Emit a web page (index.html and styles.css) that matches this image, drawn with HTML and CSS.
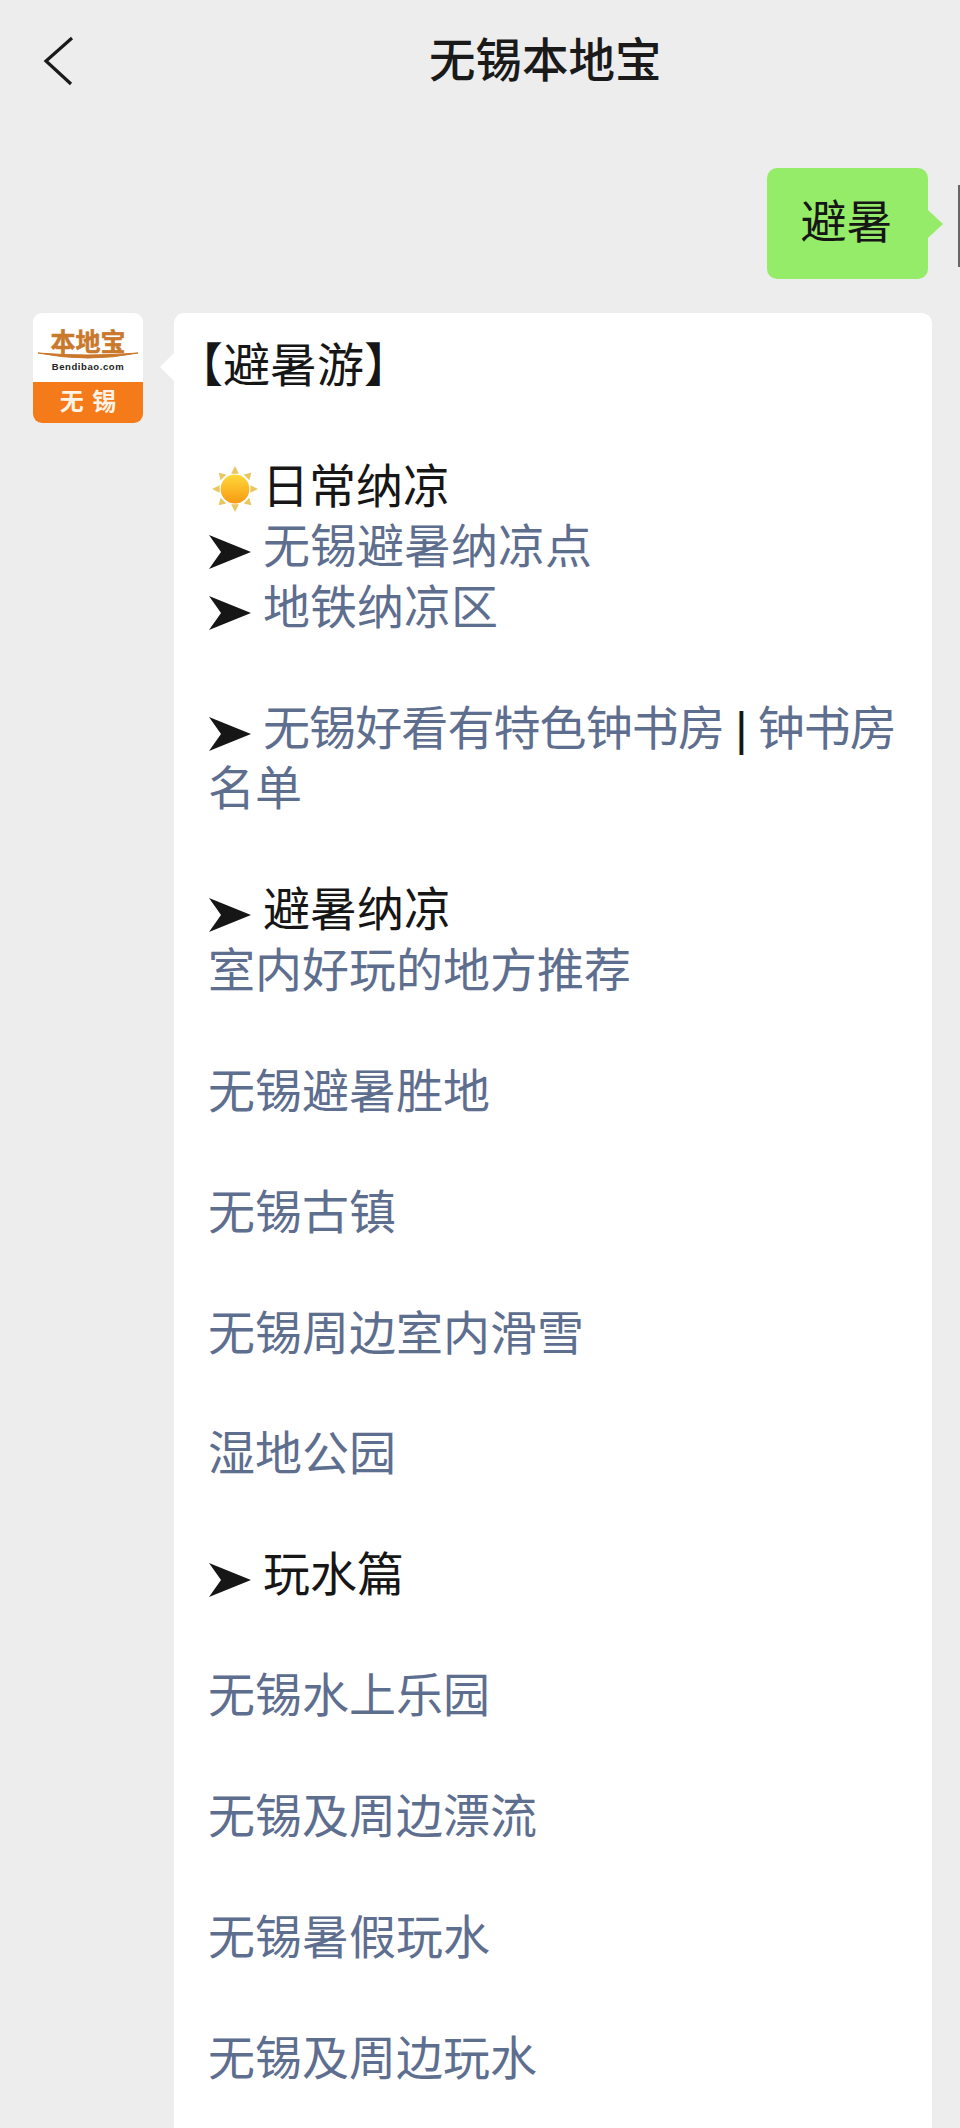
FILE: index.html
```html
<!DOCTYPE html>
<html lang="zh-CN">
<head>
    <meta charset="UTF-8">
    <meta name="viewport" content="width=device-width, initial-scale=1.0">
    <title>无锡本地宝</title>
    <link rel="stylesheet" href="styles.css">
</head>
<body>
    <svg class="defs" width="0" height="0">
        <symbol id="dart" viewBox="0 0 42 34">
            <path d="M0 0 L42 17 L0 34 L12 17 Z" fill="#161616"/>
        </symbol>
    </svg>

    <header class="topbar">
        <svg class="back" width="40" height="56" viewBox="0 0 40 56">
            <path d="M32 5 L6 28 L31 51" fill="none" stroke="#1a1a1a" stroke-width="3.2"/>
        </svg>
        <h1>无锡本地宝</h1>
    </header>

    <div class="row-out">
        <div class="bubble-out">避暑</div>
        <span class="edge"></span>
    </div>

    <div class="row-in">
        <div class="avatar">
            <div class="avatar-top">
                <span class="logo-name">本地宝</span>
                <svg class="logo-swoosh" width="100" height="9" viewBox="0 0 100 9">
                    <path d="M0 1 Q50 11 100 1 Q50 5 0 1 Z" fill="#c9782c" stroke="#c9782c" stroke-width="1"/>
                </svg>
                <span class="logo-url">Bendibao.com</span>
            </div>
            <div class="avatar-bottom">无 锡</div>
        </div>
        <div class="bubble-in">
            <p class="bracket">【避暑游】</p>
            <p class="gap"><svg class="sun" width="50" height="50" viewBox="0 0 50 50">
                <g fill="#e8c660">
                    <path d="M25 1 L29 9 L21 9 Z"/>
                    <path d="M25 49 L29 41 L21 41 Z"/>
                    <path d="M1 25 L9 21 L9 29 Z"/>
                    <path d="M49 25 L41 21 L41 29 Z"/>
                    <path d="M8 8 L16 10 L10 16 Z"/>
                    <path d="M42 8 L40 16 L34 10 Z"/>
                    <path d="M8 42 L10 34 L16 40 Z"/>
                    <path d="M42 42 L34 40 L40 34 Z"/>
                </g>
                <defs>
                    <linearGradient id="sunFill" x1="0" y1="0" x2="0" y2="1">
                        <stop offset="0" stop-color="#ffd83a"/>
                        <stop offset="1" stop-color="#f79a12"/>
                    </linearGradient>
                </defs>
                <circle cx="25" cy="25" r="15" fill="url(#sunFill)"/>
            </svg>日常纳凉</p>
            <p><svg class="arrow"><use href="#dart"/></svg><a>无锡避暑纳凉点</a></p>
            <p><svg class="arrow"><use href="#dart"/></svg><a>地铁纳凉区</a></p>
            <p class="gap tight"><svg class="arrow"><use href="#dart"/></svg><a>无锡好看有特色钟书房</a> | <a>钟书房</a></p>
            <p><a>名单</a></p>
            <p class="gap"><svg class="arrow"><use href="#dart"/></svg>避暑纳凉</p>
            <p><a>室内好玩的地方推荐</a></p>
            <p class="gap"><a>无锡避暑胜地</a></p>
            <p class="gap"><a>无锡古镇</a></p>
            <p class="gap"><a>无锡周边室内滑雪</a></p>
            <p class="gap"><a>湿地公园</a></p>
            <p class="gap"><svg class="arrow"><use href="#dart"/></svg>玩水篇</p>
            <p class="gap"><a>无锡水上乐园</a></p>
            <p class="gap"><a>无锡及周边漂流</a></p>
            <p class="gap"><a>无锡暑假玩水</a></p>
            <p class="gap"><a>无锡及周边玩水</a></p>
        </div>
    </div>
</body>
</html>
```
FILE: styles.css
```css
html, body {
    margin: 0;
    height: 2128px;
    overflow: hidden;
}
body {
    background: #ededed;
    color: #161616;
    font-family: "Liberation Sans", "Noto Sans CJK SC", sans-serif;
}
.defs {
    position: absolute;
}
.topbar {
    height: 122px;
    display: flex;
    align-items: center;
    padding-left: 40px;
}
.topbar h1 {
    margin: 0 0 0 349px;
    font-size: 46.5px;
    font-weight: 500;
    line-height: 122px;
    color: #1a1a1a;
}
.back {
    flex-shrink: 0;
}
.row-out {
    display: flex;
    justify-content: flex-end;
    margin-top: 46px;
    height: 111px;
    padding-right: 32px;
}
.bubble-out {
    position: relative;
    width: 161px;
    height: 111px;
    padding-right: 2px;
    box-sizing: border-box;
    background: #95ec69;
    border-radius: 10px;
    font-size: 46px;
    line-height: 108px;
    text-align: center;
}
.bubble-out::after {
    content: "";
    position: absolute;
    right: -15px;
    top: 42px;
    border-left: 15px solid #95ec69;
    border-top: 14px solid transparent;
    border-bottom: 14px solid transparent;
}
.edge {
    position: absolute;
    right: 0;
    top: 185px;
    width: 2px;
    height: 82px;
    background: #666;
}
.row-in {
    display: flex;
    align-items: flex-start;
    margin-top: 34px;
    padding-left: 33px;
}
.avatar {
    width: 110px;
    height: 110px;
    border-radius: 9px;
    overflow: hidden;
    flex-shrink: 0;
    background: #fff;
    display: flex;
    flex-direction: column;
}
.avatar-top {
    height: 69px;
    display: flex;
    flex-direction: column;
    align-items: center;
    padding-top: 17px;
    box-sizing: border-box;
}
.logo-name {
    font-size: 25px;
    line-height: 25px;
    font-weight: 700;
    color: #c9782c;
    -webkit-text-stroke: 0.5px #c9782c;
}
.logo-swoosh {
    margin-top: -3px;
}
.logo-url {
    font-size: 9.5px;
    line-height: 12px;
    font-weight: 700;
    color: #222;
    letter-spacing: 0.6px;
}
.avatar-bottom {
    flex: 1;
    background: #f47a1a;
    color: #fdf3e6;
    font-size: 24px;
    font-weight: 700;
    line-height: 39px;
    text-align: center;
    word-spacing: 2px;
}
.bubble-in {
    position: relative;
    width: 758px;
    margin-left: 31px;
    box-sizing: border-box;
    padding: 23px 15px 100px 34px;
    background: #fff;
    border-radius: 10px;
    font-size: 47px;
    line-height: 60.47px;
}
.bubble-in::before {
    content: "";
    position: absolute;
    left: -14px;
    top: 40px;
    border-right: 14px solid #fff;
    border-top: 14px solid transparent;
    border-bottom: 14px solid transparent;
}
.bubble-in p {
    margin: 0;
}
.bubble-in p.gap {
    margin-top: 60.47px;
}
.bubble-in p.bracket {
    margin-left: -32px;
}
.bubble-in p.tight {
    letter-spacing: -0.9px;
    word-spacing: -1px;
    white-space: nowrap;
}
.bubble-in a {
    color: #5e6e8f;
}
.arrow {
    width: 42px;
    height: 34px;
    margin: 0 12px 0 1px;
    vertical-align: -6px;
}
.sun {
    width: 48px;
    height: 48px;
    vertical-align: -10px;
    margin: 0 3px 0 3px;
}
```
